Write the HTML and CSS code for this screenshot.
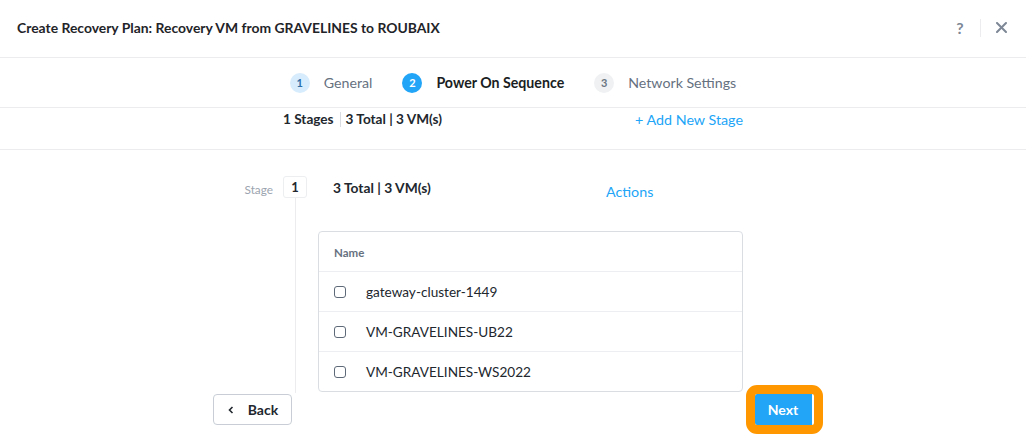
FILE: index.html
```html
<!DOCTYPE html>
<html>
<head>
<meta charset="utf-8">
<link rel="stylesheet" href="styles.css">
</head>
<body>
<div class="modal">
  <header class="header">
    <h1 class="title">Create Recovery Plan: Recovery VM from GRAVELINES to ROUBAIX</h1>
    <div class="header-actions">
      <span class="help">?</span>
      <span class="divider"></span>
      <svg class="close" width="11" height="11" viewBox="0 0 11 11"><path d="M1 1L10 10M10 1L1 10" stroke="#7d8796" stroke-width="2" stroke-linecap="round"/></svg>
    </div>
  </header>

  <nav class="steps">
    <div class="step done"><span class="num">1</span><span class="label">General</span></div>
    <div class="step active"><span class="num">2</span><span class="label">Power On Sequence</span></div>
    <div class="step todo"><span class="num">3</span><span class="label">Network Settings</span></div>
  </nav>

  <section class="summary">
    <div class="column summary-row">
      <div class="summary-info"><span>1 Stages</span><span class="sep"></span><span>3 Total | 3 VM(s)</span></div>
      <a class="link">+ Add New Stage</a>
    </div>
  </section>

  <section class="stages">
    <div class="column stage">
      <div class="stage-left">
        <span class="stage-label">Stage</span>
        <span class="stage-num">1</span>
        <span class="stage-line"></span>
      </div>
      <div class="stage-right">
        <div class="stage-head">
          <span class="stage-count">3 Total | 3 VM(s)</span>
          <a class="link actions">Actions</a>
        </div>
        <div class="table">
          <div class="row head">Name</div>
          <div class="row"><span class="cb"></span>gateway-cluster-1449</div>
          <div class="row"><span class="cb"></span>VM-GRAVELINES-UB22</div>
          <div class="row"><span class="cb"></span>VM-GRAVELINES-WS2022</div>
        </div>
      </div>
    </div>
  </section>

  <footer class="footer">
    <button class="btn back"><svg width="6" height="8" viewBox="0 0 6 8"><path d="M4.5 1L1.5 4L4.5 7" fill="none" stroke="#22272e" stroke-width="1.6"/></svg>Back</button>
    <button class="btn next">Next</button>
  </footer>
</div>
</body>
</html>
```

FILE: styles.css
```css
* { box-sizing: border-box; }
html, body { margin: 0; padding: 0; background: #fff; }
body {
  font-family: Lato, "Liberation Sans", sans-serif;
  color: #22272e;
  width: 1026px;
  height: 440px;
  overflow: hidden;
}
.header {
  height: 58px;
  border-bottom: 1px solid #ececee;
  display: flex;
  align-items: center;
  justify-content: space-between;
  padding: 0 17px 2px 17px;
}
.title {
  margin: 0;
  font-size: 13.9px;
  font-weight: 700;
  color: #1f2429;
}
.header-actions { display: flex; align-items: center; }
.help { font-size: 16px; font-weight: 700; color: #7d8796; width: 12px; text-align: center; }
.divider { width: 1px; height: 18px; background: #ececee; margin: 0 15px 0 14px; }
.close { display: block; margin-right: 2px; }

.steps {
  height: 50px;
  border-bottom: 1px solid #ececee;
  display: flex;
  justify-content: center;
  align-items: center;
  gap: 30px;
}
.step { display: flex; align-items: center; gap: 14px; font-size: 14.2px; }
.num {
  width: 20px; height: 20px; border-radius: 50%;
  display: flex; align-items: center; justify-content: center;
  font-size: 11px; font-weight: 700;
}
.done .num { background: #d7ecfc; color: #2e6fa8; }
.done .label { color: #66717f; }
.active .num { background: #22a5f7; color: #fff; }
.active .label { color: #1a1e23; font-weight: 700; }
.todo .num { background: #eff1f3; color: #6a7582; }
.todo .label { color: #66717f; }

.column { width: 460px; margin: 0 auto; }
.summary { height: 42px; border-bottom: 1px solid #ececee; padding-top: 0; }
.summary-row { display: flex; justify-content: space-between; align-items: center; height: 22px; }
.summary-info { display: flex; align-items: center; font-size: 13.6px; font-weight: 700; color: #22272e; }
.sep { width: 1px; height: 15px; background: #d9dde2; margin: 0 5px 0 6px; }
.link { color: #22a5f7; font-size: 14.3px; cursor: pointer; }

.stages { height: 243px; padding-top: 26px; }
.stage { display: flex; height: 217px; }
.stage-left { position: relative; width: 24px; display: flex; flex-direction: column; align-items: center; }
.stage-label {
  position: absolute; right: 34px; top: 6px;
  font-size: 11.8px; color: #9ba4af;
}
.stage-num {
  width: 24px; height: 22px; border: 1px solid #eceef0; border-radius: 3px;
  display: flex; align-items: center; justify-content: center;
  font-size: 13px; font-weight: 700; color: #22272e;
}
.stage-line { flex: 1; width: 1px; background: #ececee; }
.stage-right { margin-left: 11px; width: 425px; display: flex; flex-direction: column; }
.stage-head { height: 22px; display: flex; align-items: center; padding-left: 15px; margin-bottom: 33px; }
.stage-count { font-size: 13.8px; font-weight: 700; width: 273px; }
.actions { padding-top: 9px; }

.table { border: 1px solid #dadee3; border-radius: 4px; }
.row {
  height: 40px; display: flex; align-items: center; padding-left: 15px;
  font-size: 13.6px; color: #22272e; border-top: 1px solid #eceef1; padding-top: 1px;
}
.row.head { border-top: none; height: 39px; font-size: 11.5px; font-weight: 700; color: #66717f; }
.cb {
  width: 12px; height: 12px; border: 1.5px solid #5e6977; border-radius: 3px; margin-right: 20px;
}

.footer {
  width: 601px; margin: 0 auto; padding-top: 1px;
  display: flex; justify-content: space-between; align-items: flex-start;
}
.btn {
  font-family: inherit; font-size: 14px; font-weight: 700; height: 31px; border-radius: 4px; cursor: pointer;
}
.back {
  width: 79px; background: #fff; border: 1px solid #c9ced6; color: #22272e;
  display: flex; align-items: center; justify-content: center; gap: 14px; padding: 0 0 0 2px;
}
.back svg { display: block; }
.next {
  width: 59px; background: #22a5f7; color: #fff; border: none; border-right: 2px solid #fff;
  border-radius: 2px; outline: 9px solid #ff9800; outline-offset: 0;
}
```
